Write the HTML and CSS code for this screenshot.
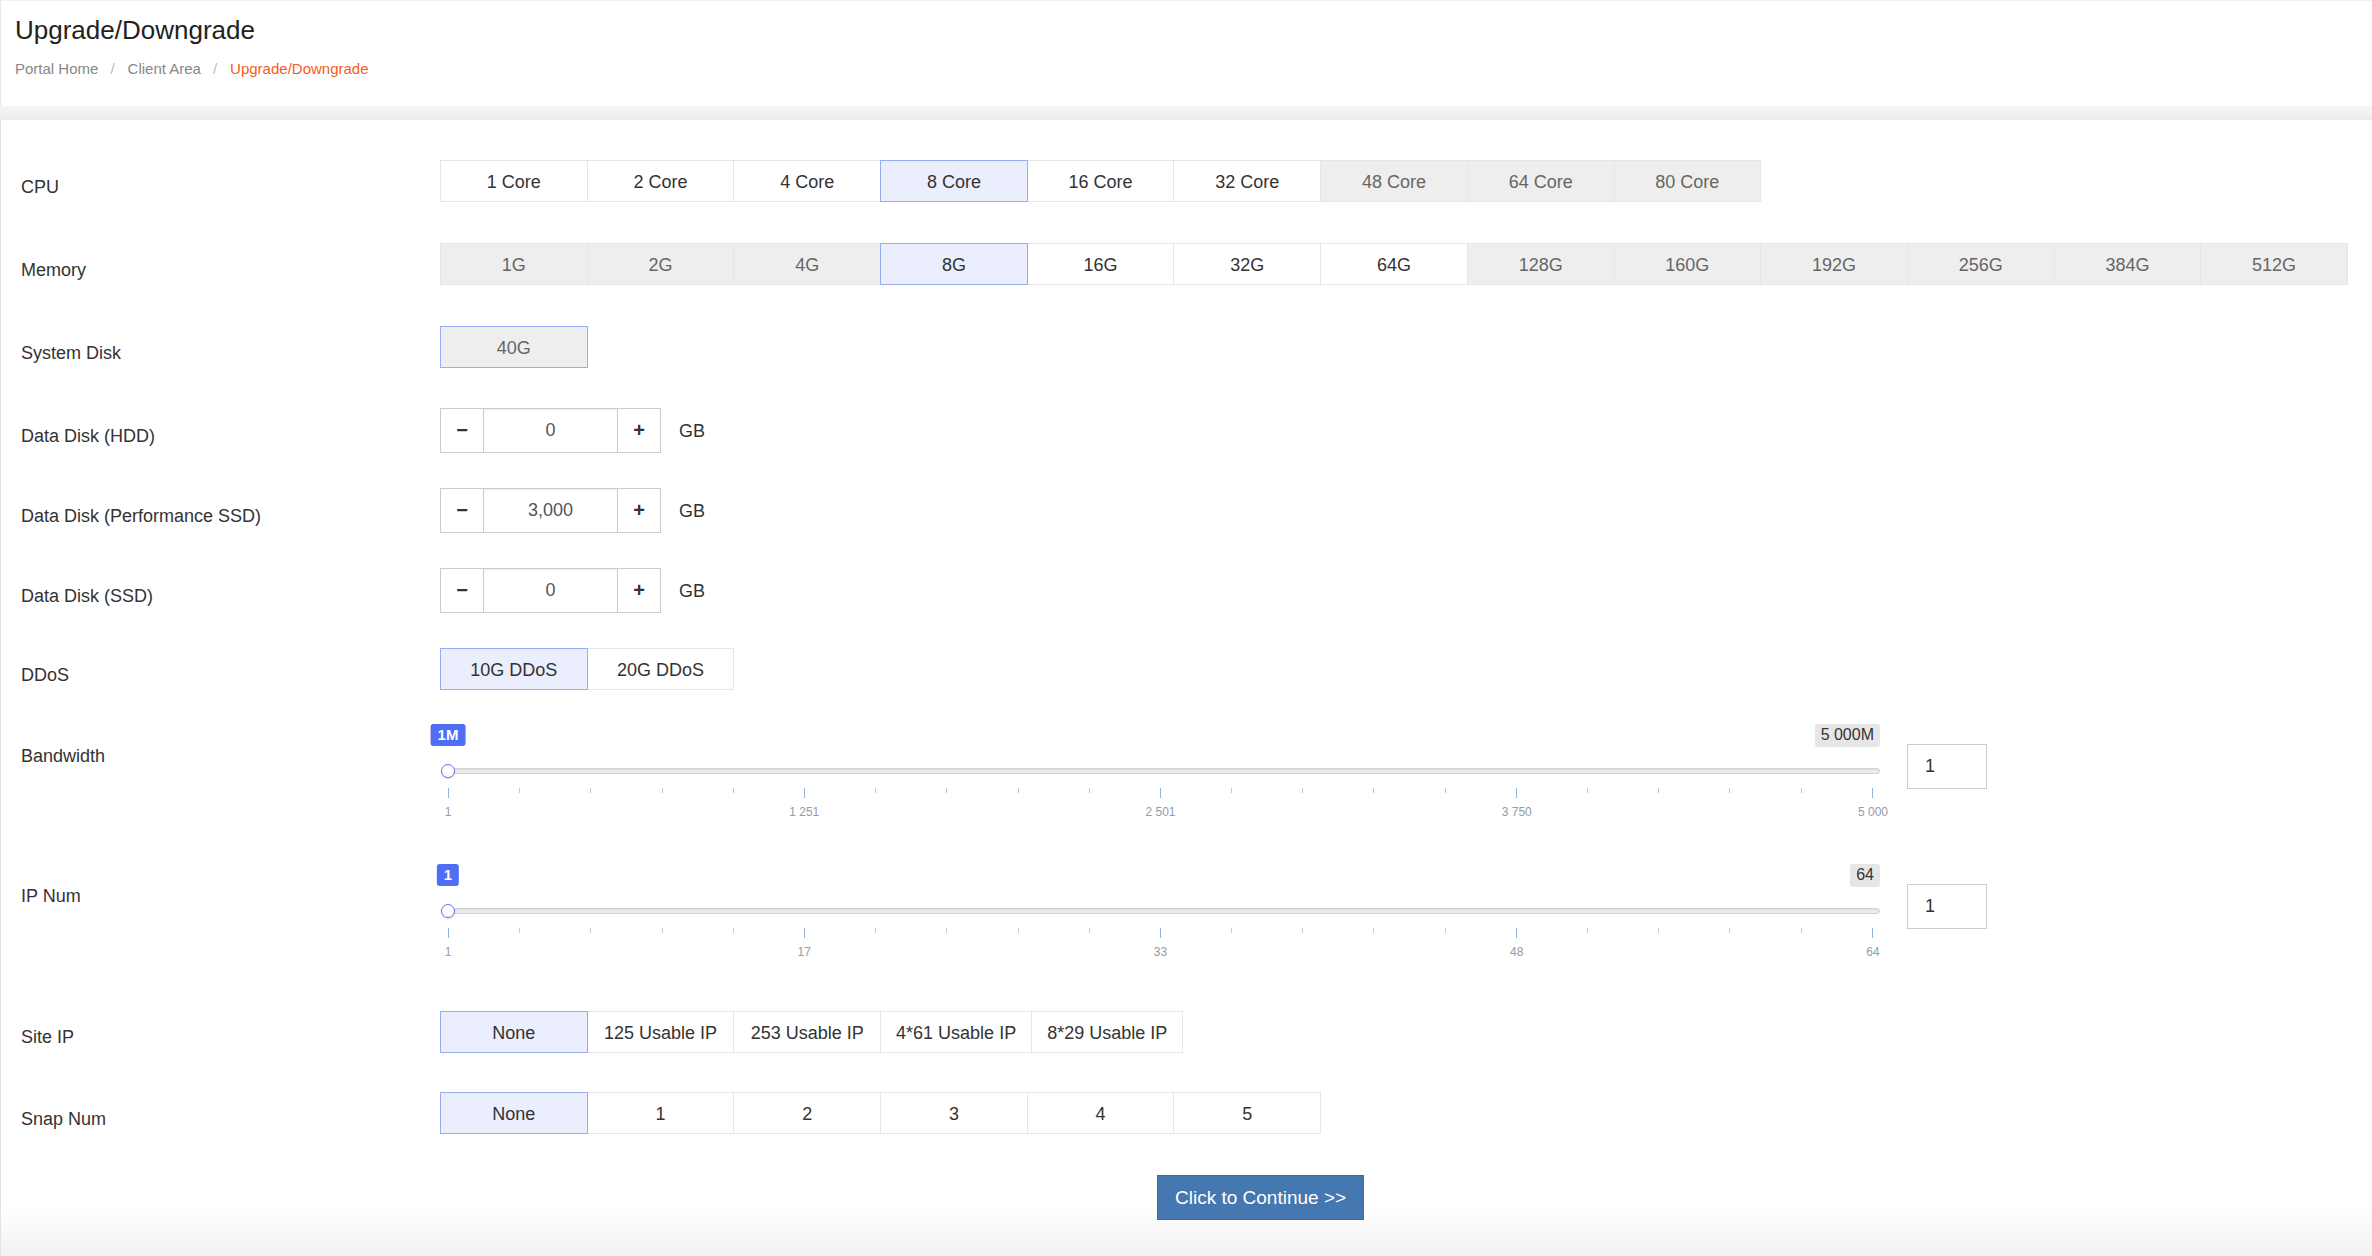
FILE: index.html
```html
<!DOCTYPE html>
<html lang="en">
<head>
    <meta charset="UTF-8">
    <title>Upgrade/Downgrade</title>
    <link rel="stylesheet" href="styles.css">
</head>
<body>
    <div class="page-header">
        <h1 class="page-title">Upgrade/Downgrade</h1>
        <div class="breadcrumb">
            <span>Portal Home</span><span class="sep">/</span>
            <span>Client Area</span><span class="sep">/</span>
            <span class="current">Upgrade/Downgrade</span>
        </div>
    </div>
    <div class="band"></div>

    <div class="card">
        <div class="field">
            <div class="field-label">CPU</div>
            <div class="options">
                <div class="option">1 Core</div>
                <div class="option">2 Core</div>
                <div class="option">4 Core</div>
                <div class="option is-active">8 Core</div>
                <div class="option">16 Core</div>
                <div class="option">32 Core</div>
                <div class="option is-disabled">48 Core</div>
                <div class="option is-disabled">64 Core</div>
                <div class="option is-disabled">80 Core</div>
            </div>
        </div>

        <div class="field">
            <div class="field-label">Memory</div>
            <div class="options">
                <div class="option is-disabled">1G</div>
                <div class="option is-disabled">2G</div>
                <div class="option is-disabled">4G</div>
                <div class="option is-active">8G</div>
                <div class="option">16G</div>
                <div class="option">32G</div>
                <div class="option">64G</div>
                <div class="option is-disabled">128G</div>
                <div class="option is-disabled">160G</div>
                <div class="option is-disabled">192G</div>
                <div class="option is-disabled">256G</div>
                <div class="option is-disabled">384G</div>
                <div class="option is-disabled">512G</div>
            </div>
        </div>

        <div class="field field--sys">
            <div class="field-label">System Disk</div>
            <div class="options">
                <div class="option is-disabled is-active">40G</div>
            </div>
        </div>

        <div class="field field--stepper">
            <div class="field-label">Data Disk (HDD)</div>
            <div class="stepper">
                <div class="step-btn">&minus;</div>
                <input class="step-input" type="text" value="0">
                <div class="step-btn">+</div>
                <span class="unit">GB</span>
            </div>
        </div>

        <div class="field field--stepper">
            <div class="field-label">Data Disk (Performance SSD)</div>
            <div class="stepper">
                <div class="step-btn">&minus;</div>
                <input class="step-input" type="text" value="3,000">
                <div class="step-btn">+</div>
                <span class="unit">GB</span>
            </div>
        </div>

        <div class="field field--stepper">
            <div class="field-label">Data Disk (SSD)</div>
            <div class="stepper">
                <div class="step-btn">&minus;</div>
                <input class="step-input" type="text" value="0">
                <div class="step-btn">+</div>
                <span class="unit">GB</span>
            </div>
        </div>

        <div class="field field--ddos">
            <div class="field-label">DDoS</div>
            <div class="options">
                <div class="option is-active">10G DDoS</div>
                <div class="option">20G DDoS</div>
            </div>
        </div>

        <div class="field field--slider">
            <div class="field-label">Bandwidth</div>
            <div class="slider">
                <span class="slider-value">1M</span>
                <span class="slider-max">5 000M</span>
                <div class="slider-track"></div>
                <span class="slider-handle"></span>
                <div class="slider-ticks">
                    <i class="major"></i><i></i><i></i><i></i><i></i>
                    <i class="major"></i><i></i><i></i><i></i><i></i>
                    <i class="major"></i><i></i><i></i><i></i><i></i>
                    <i class="major"></i><i></i><i></i><i></i><i></i>
                    <i class="major"></i>
                </div>
                <div class="slider-labels">
                    <span>1</span><span>1 251</span><span>2 501</span><span>3 750</span><span>5 000</span>
                </div>
            </div>
            <input class="slider-input" type="text" value="1">
        </div>

        <div class="field field--slider field--ip">
            <div class="field-label">IP Num</div>
            <div class="slider">
                <span class="slider-value">1</span>
                <span class="slider-max">64</span>
                <div class="slider-track"></div>
                <span class="slider-handle"></span>
                <div class="slider-ticks">
                    <i class="major"></i><i></i><i></i><i></i><i></i>
                    <i class="major"></i><i></i><i></i><i></i><i></i>
                    <i class="major"></i><i></i><i></i><i></i><i></i>
                    <i class="major"></i><i></i><i></i><i></i><i></i>
                    <i class="major"></i>
                </div>
                <div class="slider-labels">
                    <span>1</span><span>17</span><span>33</span><span>48</span><span>64</span>
                </div>
            </div>
            <input class="slider-input" type="text" value="1">
        </div>

        <div class="field field--site">
            <div class="field-label">Site IP</div>
            <div class="options">
                <div class="option option--wide is-active">None</div>
                <div class="option option--wide">125 Usable IP</div>
                <div class="option option--wide">253 Usable IP</div>
                <div class="option option--wide">4*61 Usable IP</div>
                <div class="option option--wide">8*29 Usable IP</div>
            </div>
        </div>

        <div class="field">
            <div class="field-label">Snap Num</div>
            <div class="options">
                <div class="option is-active">None</div>
                <div class="option">1</div>
                <div class="option">2</div>
                <div class="option">3</div>
                <div class="option">4</div>
                <div class="option">5</div>
            </div>
        </div>

        <div class="actions">
            <button class="btn-continue" type="button">Click to Continue &gt;&gt;</button>
        </div>
    </div>
</body>
</html>
```

FILE: styles.css
```css
body {
    margin: 0;
    font-family: "Liberation Sans", Arial, sans-serif;
    color: #333;
    background: #fff;
}

/* header */
.page-header {
    height: 106px;
    box-sizing: border-box;
    padding: 13px 0 0 14px;
    border-left: 1px solid #e8e8e8;
    border-top: 1px solid #f0f0f0;
}

.page-title {
    margin: 0;
    font-size: 26px;
    font-weight: 400;
    line-height: 32px;
    color: #222;
}

.breadcrumb {
    margin-top: 13px;
    display: flex;
    font-size: 15px;
    line-height: 20px;
    color: #888;
}

.breadcrumb .sep {
    color: #bbb;
    padding: 0 13px 0 12px;
}

.breadcrumb .current {
    color: #f25c24;
}

.band {
    height: 14px;
    background: linear-gradient(#f6f6f6, #ebebeb);
}

/* form card */
.card {
    min-height: 1136px;
    box-sizing: border-box;
    padding-top: 40px;
    border-left: 1px solid #e3e3e3;
    background: linear-gradient(to bottom, #fff calc(100% - 48px), #f1f1f1);
}

.field {
    display: flex;
    align-items: flex-start;
    margin-bottom: 41px;
}

.field--sys { margin-bottom: 40px; }
.field--stepper { margin-bottom: 35px; }
.field--ddos { margin-bottom: 34px; }
.field--slider { margin-bottom: 44px; }
.field--ip { margin-bottom: 51px; }
.field--site { margin-bottom: 39px; }

.field-label {
    flex: none;
    width: 439px;
    box-sizing: border-box;
    padding: 15px 0 0 20px;
    font-size: 18px;
    line-height: 24px;
}

.field--stepper .field-label { padding-top: 16px; }
.field--slider .field-label { padding-top: 20px; }
.field--site .field-label { padding-top: 14px; }

/* button groups */
.options {
    display: flex;
}

.option {
    flex: none;
    width: 147.7px;
    height: 42px;
    box-sizing: border-box;
    margin-right: -1px;
    padding-top: 2px;
    border: 1px solid #e6e6e6;
    background: #fff;
    font-size: 18px;
    color: #333;
    display: flex;
    align-items: center;
    justify-content: center;
    white-space: nowrap;
}

.option--wide {
    width: auto;
    min-width: 147.7px;
    padding: 2px 15px 0;
}

.option.is-disabled {
    background: #eee;
    color: #666;
}

.option.is-active {
    position: relative;
    z-index: 1;
    background: #ebeefd;
    border-color: #98abf5;
}

.option.is-disabled.is-active {
    background: #eee;
}

/* number steppers */
.stepper {
    display: flex;
    align-items: center;
}

.step-btn {
    width: 44px;
    height: 45px;
    box-sizing: border-box;
    border: 1px solid #ccc;
    background: #fff;
    font-size: 20px;
    font-weight: 700;
    color: #333;
    display: flex;
    align-items: center;
    justify-content: center;
}

.step-input {
    width: 135px;
    height: 45px;
    box-sizing: border-box;
    margin: 0 -1px;
    padding: 0 0 1px;
    border: 1px solid #ccc;
    box-shadow: inset 0 1px 1px rgba(0,0,0,0.08);
    font-family: "Liberation Sans", Arial, sans-serif;
    font-size: 18px;
    color: #555;
    text-align: center;
    outline: none;
}

.unit {
    margin-left: 18px;
    padding-top: 2px;
    font-size: 18px;
}

/* range sliders */
.slider {
    position: relative;
    width: 1440px;
    height: 96px;
}

.slider-value,
.slider-max {
    position: absolute;
    top: 0;
    height: 22px;
    line-height: 22px;
    padding: 0 7px;
    border-radius: 3px;
    white-space: nowrap;
}

.slider-value {
    left: 8px;
    transform: translateX(-50%);
    background: #4f6ef5;
    color: #fff;
    font-size: 15px;
    font-weight: 700;
}

.slider-max {
    right: 0;
    height: 23px;
    background: #e6e6e6;
    color: #333;
    font-size: 16px;
    padding: 0 6px;
}

.slider-track {
    margin: 0 0 0 6px;
    height: 6px;
    box-sizing: border-box;
    border: 1px solid #d2d2d2;
    border-radius: 3px;
    background: #ededed;
    box-shadow: inset 0 1px 2px rgba(0,0,0,0.08);
    transform: translateY(44px);
}

.slider-handle {
    position: absolute;
    left: 1px;
    top: 40px;
    width: 14px;
    height: 14px;
    box-sizing: border-box;
    border: 1.5px solid #5a79f5;
    border-radius: 50%;
    background: #fff;
    box-shadow: 0 1px 2px rgba(0,0,0,0.15);
}

.slider-ticks {
    display: flex;
    justify-content: space-between;
    align-items: flex-start;
    margin: 58px 7px 0 8px;
    height: 10px;
}

.slider-ticks i {
    width: 1px;
    height: 5px;
    background: #c9c9c9;
}

.slider-ticks i.major {
    height: 10px;
    background: #93b3dd;
}

.slider-labels {
    display: flex;
    justify-content: space-between;
    margin: 7px 7px 0 8px;
    font-size: 12px;
    line-height: 14px;
    color: #969aa1;
}

.slider-labels span {
    width: 0;
    display: flex;
    justify-content: center;
    white-space: nowrap;
}

.slider-input {
    flex: none;
    width: 80px;
    height: 45px;
    box-sizing: border-box;
    margin: 20px 0 0 27px;
    padding: 0 0 0 17px;
    border: 1px solid #ccc;
    font-family: "Liberation Sans", Arial, sans-serif;
    font-size: 18px;
    color: #333;
    outline: none;
}

/* submit */
.actions {
    padding-left: 1156px;
}

.btn-continue {
    height: 45px;
    padding: 0 17px;
    border: 1px solid #3d6ba3;
    background: #4577b0;
    color: #fff;
    font-family: "Liberation Sans", Arial, sans-serif;
    font-size: 19px;
    cursor: pointer;
}
```
